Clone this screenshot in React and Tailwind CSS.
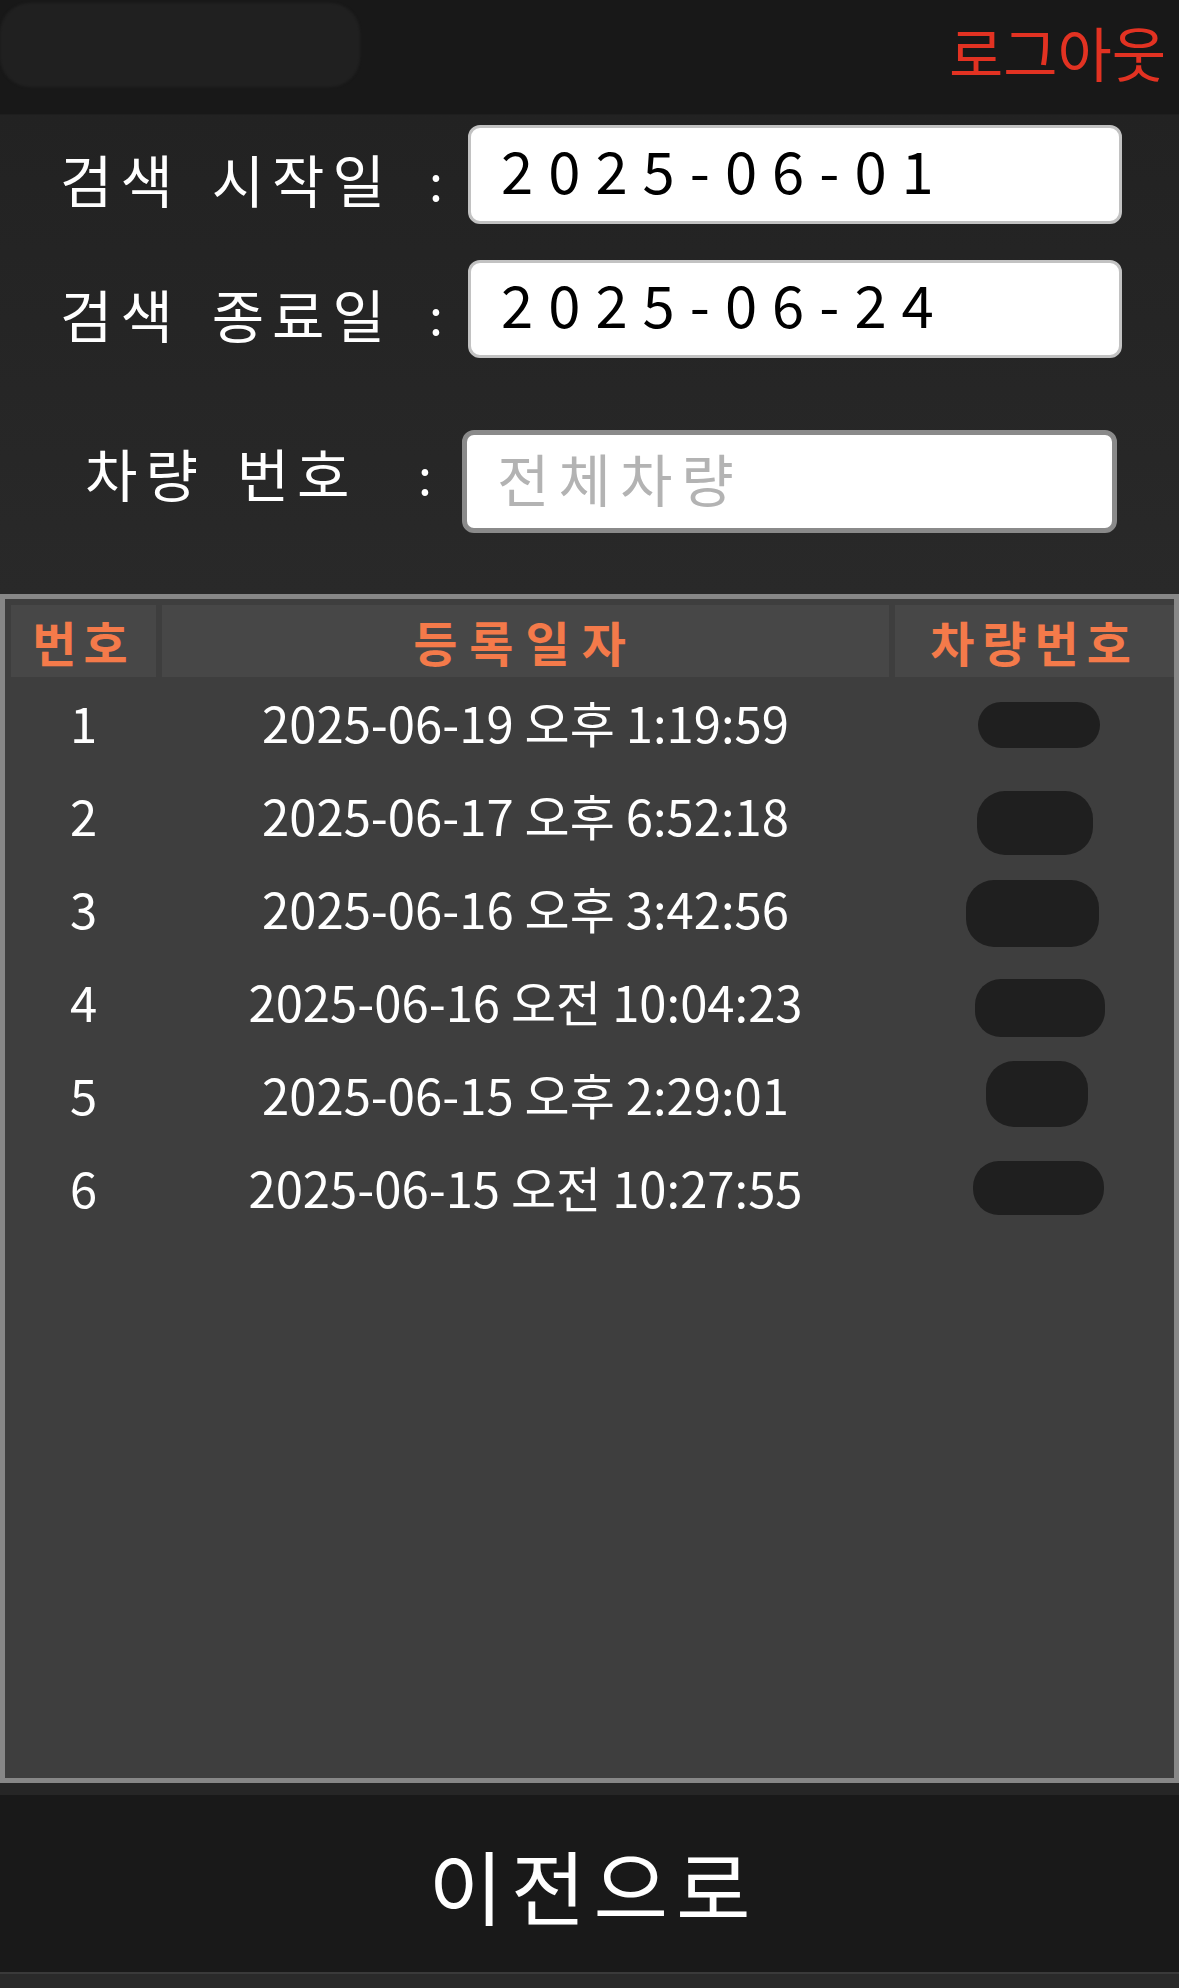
import React from 'react';

const rows = [
  { no: 1, date: '2025-06-19 오후 1:19:59', blob: 'w-[122px] h-[46px] mt-[-4px] ml-[8px] rounded-[24px]' },
  { no: 2, date: '2025-06-17 오후 6:52:18', blob: 'w-[116px] h-[64px] mt-[6px] ml-[0px] rounded-[28px]' },
  { no: 3, date: '2025-06-16 오후 3:42:56', blob: 'w-[133px] h-[67px] mt-[2px] ml-[-4px] rounded-[28px]' },
  { no: 4, date: '2025-06-16 오전 10:04:23', blob: 'w-[130px] h-[58px] mt-[4px] ml-[10px] rounded-[26px]' },
  { no: 5, date: '2025-06-15 오후 2:29:01', blob: 'w-[102px] h-[66px] mt-[-10px] ml-[4px] rounded-[28px]' },
  { no: 6, date: '2025-06-15 오전 10:27:55', blob: 'w-[131px] h-[54px] mt-[-8px] ml-[8px] rounded-[26px]' },
];

function DateField({ value }) {
  return (
    <input
      readOnly
      value={value}
      className="w-[654px] h-full bg-white border-[3px] border-[#c2c2c2] rounded-[12px] pl-[30px] pb-[12px] text-[58px] tracking-[15px] text-black outline-none"
    />
  );
}

export default function App() {
  return (
    <div className="w-[1179px] h-[1988px] flex flex-col bg-[#262626] font-['Noto_Sans_CJK_KR',sans-serif] overflow-hidden">
      {/* header */}
      <div className="h-[115px] shrink-0 bg-[#181818] border-b border-[#1e1e1e] flex items-start justify-between">
        <div className="mt-[3px] w-[360px] h-[84px] bg-[#202020] rounded-[30px] blur-[1px]" />
        <button className="mr-[13px] mt-[22px] text-[59px] leading-none text-[#e23222]">로그아웃</button>
      </div>

      {/* search form */}
      <div className="h-[479px] shrink-0 flex flex-col pt-[10px] bg-gradient-to-b from-[#222222] to-[#292929]">
        <div className="h-[99px] flex items-center">
          <span className="ml-[60px] pt-[8px] text-[57px] leading-none tracking-[8px] [word-spacing:10px] text-white whitespace-pre">검색 시작일</span>
          <span className="ml-auto w-[30px] text-center pt-[8px] text-[50px] leading-none text-white">:</span>
          <div className="ml-[17px] mr-[57px] h-full"><DateField value="2025-06-01" /></div>
        </div>
        <div className="mt-[36px] h-[98px] flex items-center">
          <span className="ml-[60px] pt-[8px] text-[57px] leading-none tracking-[8px] [word-spacing:10px] text-white whitespace-pre">검색 종료일</span>
          <span className="ml-auto w-[30px] text-center pt-[8px] text-[50px] leading-none text-white">:</span>
          <div className="ml-[17px] mr-[57px] h-full"><DateField value="2025-06-24" /></div>
        </div>
        <div className="mt-[72px] h-[103px] flex items-center">
          <span className="ml-[85px] pb-[18px] text-[57px] leading-none tracking-[8px] [word-spacing:10px] text-white whitespace-pre">차량 번호</span>
          <span className="ml-auto w-[30px] text-center pb-[18px] text-[50px] leading-none text-white">:</span>
          <input
            placeholder="전체차량"
            className="ml-[22px] mr-[62px] w-[655px] h-full bg-white border-[5px] border-[#8a8a8a] rounded-[12px] pl-[30px] pb-[10px] text-[57px] tracking-[9px] text-black placeholder:text-[#b3b3b3] outline-none"
          />
        </div>
      </div>

      {/* list table */}
      <div className="h-[1189px] shrink-0 border-[5px] border-[#878787] bg-[#3e3e3e] flex flex-col">
        <div className="flex gap-[6px] pl-[6px] pt-[6px]">
          <div className="w-[145px] h-[72px] bg-[#474747] flex items-center justify-center text-[48px] leading-none font-bold tracking-[7px] text-[#f47a4a]">번호</div>
          <div className="w-[727px] h-[72px] bg-[#474747] flex items-center justify-center text-[48px] leading-none font-bold tracking-[12px] text-[#f47a4a]">등록일자</div>
          <div className="flex-1 h-[72px] bg-[#474747] flex items-center justify-center text-[48px] leading-none font-bold tracking-[8px] text-[#f47a4a]">차량번호</div>
        </div>
        <div className="flex flex-col gap-[6px] pl-[6px] pt-[6px]">
          {rows.map((r) => (
            <div key={r.no} className="flex gap-[6px] h-[87px] text-white text-[49px] leading-none">
              <div className="w-[145px] pb-[10px] flex items-center justify-center">{r.no}</div>
              <div className="w-[727px] pb-[10px] flex items-center justify-center whitespace-pre">{r.date}</div>
              <div className="flex-1 flex items-center justify-center">
                <div className={`bg-[#1f1f1f] ${r.blob}`} />
              </div>
            </div>
          ))}
        </div>
      </div>

      {/* footer */}
      <div className="h-[12px] shrink-0" />
      <button className="h-[177px] shrink-0 bg-[#191919] flex items-center justify-center pl-[8px] text-[81px] leading-none tracking-[8px] text-white">
        이전으로
      </button>
      <div className="flex-1 bg-[#2a2a2a] border-t-2 border-[#3a3a3a]" />
    </div>
  );
}
